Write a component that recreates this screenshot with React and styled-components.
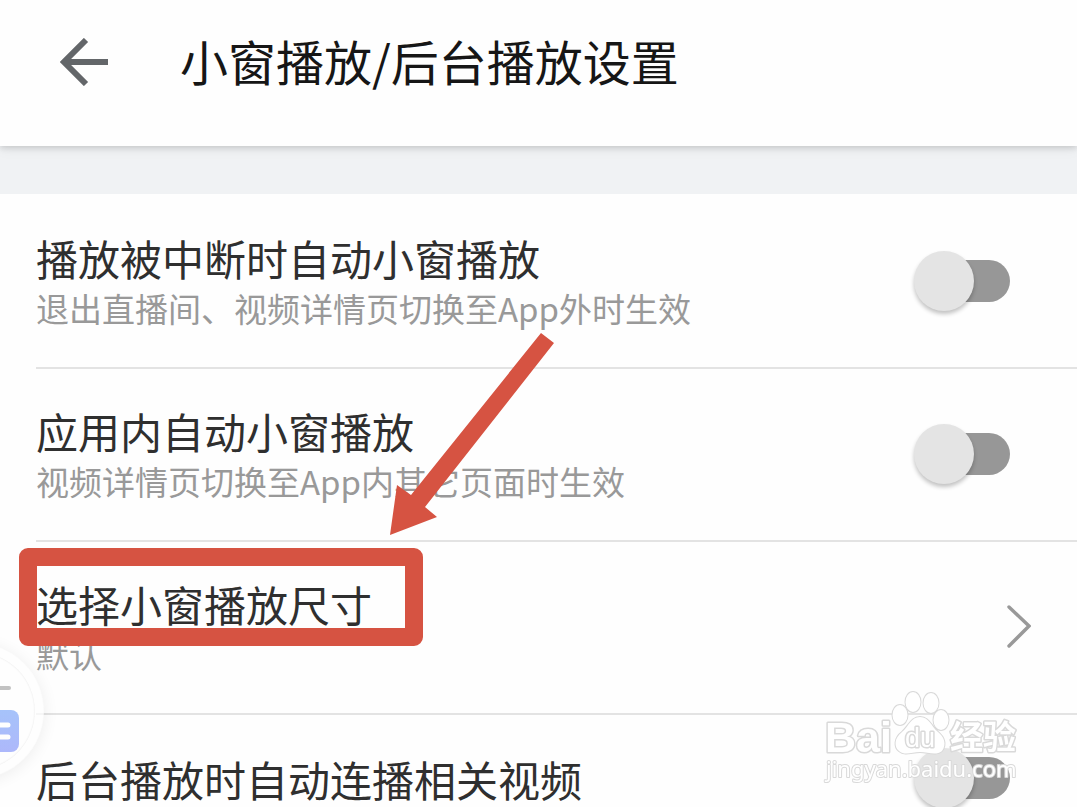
import { useState } from 'react';
import styled, { createGlobalStyle } from 'styled-components';

const GlobalStyle = createGlobalStyle`
  html {
    scrollbar-width: none;
  }

  body {
    margin: 0;
    overflow-x: hidden;
    background-color: #fefefe;
    font-family: 'Noto Sans CJK SC', sans-serif;
  }

  * {
    box-sizing: border-box;
  }
`;

const Page = styled.div`
  position: relative;
`;

const Header = styled.header`
  position: relative;
  display: flex;
  align-items: center;
  gap: 72px;
  padding: 24px 60px 46px;
  background-color: #fefefe;
  box-shadow: 0 2px 6px rgba(0, 0, 0, 0.14), 0 4px 12px rgba(0, 0, 0, 0.05);
`;

const BackButton = styled.button`
  display: flex;
  padding: 0;
  border: none;
  background: none;
  cursor: pointer;
`;

const Title = styled.h1`
  margin: 0;
  padding-bottom: 4px;
  font-weight: 400;
  font-size: 48px;
  line-height: 72px;
  color: #161616;
`;

const Content = styled.main`
  padding-top: 48px;
  background-color: #f0f2f4;
`;

const List = styled.div`
  padding: 2px 0 0 36px;
  background-color: #fefefe;
`;

const Row = styled.div`
  position: relative;
  display: flex;
  justify-content: space-between;
  align-items: center;
  width: 100%;
  min-height: 130px;
  padding: 0 67px 2px 0;
  border: none;
  border-bottom: 2px solid #e3e3e3;
  background: none;
  font-family: inherit;
  text-align: left;
`;

const LinkRow = styled(Row).attrs({ as: 'button', type: 'button' })`
  padding-right: 46px;
  cursor: pointer;
`;

const RowText = styled.span`
  display: flex;
  flex-direction: column;
  padding: ${props => (props.$tall ? '37px 0 32px' : '2px 0 0')};
`;

const RowTitle = styled.span`
  font-size: 42px;
  line-height: 50px;
  color: #2f2f2f;
`;

const RowNote = styled.span`
  font-size: 33px;
  line-height: 50px;
  color: #999999;
`;

const Toggle = styled.input.attrs({ type: 'checkbox', role: 'switch' })`
  appearance: none;
  position: relative;
  flex-shrink: 0;
  width: 96px;
  height: 60px;
  margin: 0;
  cursor: pointer;

  &::before {
    content: '';
    position: absolute;
    inset: 9px 0 9px 8px;
    border-radius: 21px;
    background-color: #979797;
  }

  &::after {
    content: '';
    position: absolute;
    top: 0;
    left: ${props => (props.checked ? '36px' : '0')};
    width: 60px;
    height: 60px;
    border-radius: 50%;
    background-color: #e4e4e4;
    box-shadow: 0 3px 4px rgba(0, 0, 0, 0.24);
  }
`;

const Highlight = styled.span`
  position: absolute;
  top: 6px;
  left: -17px;
  width: 404px;
  height: 98px;
  border: 18px solid #d65342;
  border-radius: 9px;
  pointer-events: none;
`;

const Pointer = styled.svg`
  position: absolute;
  top: -209px;
  left: 354px;
  pointer-events: none;
`;

const FloatingBall = styled.button`
  position: fixed;
  left: -92px;
  bottom: 28px;
  display: flex;
  justify-content: flex-end;
  align-items: center;
  width: 136px;
  height: 136px;
  padding: 0 16px 0 0;
  border: 9px solid rgba(254, 254, 254, 0.7);
  border-radius: 50%;
  background-color: #fefefe;
  background-clip: padding-box;
  box-shadow: 0 2px 16px rgba(0, 0, 0, 0.07), inset 0 0 2px rgba(0, 0, 0, 0.12);
`;

const Watermark = styled.svg`
  position: fixed;
  right: 54px;
  bottom: 14px;
  pointer-events: none;
`;

const BackIcon = () => (
  <svg width="48" height="48" viewBox="0 0 48 48" fill="none">
    <path d="M26 2L4 24L26 46M4 24H48" stroke="#636669" strokeWidth="6" />
  </svg>
);

const ChevronIcon = () => (
  <svg width="24" height="44" viewBox="0 0 24 44" fill="none">
    <path
      d="M2 2L22 21L2 41"
      stroke="#999999"
      strokeWidth="3.4"
      strokeLinecap="round"
    />
  </svg>
);

const PointerArrow = () => (
  <Pointer width="166" height="204" viewBox="0 0 166 204">
    <path d="M151 0L164 10L35 174L47 184L0 202L7 152L21 162Z" fill="#d65342" />
  </Pointer>
);

const BallIcon = () => (
  <svg width="40" height="64" viewBox="0 0 40 64" fill="none" overflow="visible">
    <defs>
      <linearGradient id="ball" x1="0" y1="0" x2="0" y2="1">
        <stop offset="0" stopColor="#a6c3fa" />
        <stop offset="1" stopColor="#adb8fb" />
      </linearGradient>
    </defs>
    <path d="M6 9H30" stroke="#c2c2c2" strokeWidth="4" strokeLinecap="round" />
    <rect x="-3" y="31" width="43" height="42" rx="8" fill="url(#ball)" />
    <path
      d="M6 46H29M6 58H29"
      stroke="#fefefe"
      strokeWidth="5"
      strokeLinecap="round"
    />
  </svg>
);

const BaiduMark = () => (
  <Watermark width="200" height="104" viewBox="0 0 200 104">
    <g
      fill="#ffffff"
      stroke="#d9d9d9"
      strokeWidth="3"
      paintOrder="stroke"
      strokeLinejoin="round"
    >
      <text
        x="2"
        y="63"
        fontFamily="Liberation Sans"
        fontWeight="700"
        fontSize="43"
      >
        Bai
      </text>
      <g strokeWidth="2">
        <ellipse cx="77" cy="26" rx="7.5" ry="10" />
        <ellipse cx="90" cy="13" rx="7.5" ry="10" />
        <ellipse cx="108" cy="14" rx="7.5" ry="10" />
        <ellipse cx="118" cy="31" rx="7.5" ry="10" />
        <path d="M97 28C88 28 86 37 79 43C71 49 71 58 76 62C82 67 89 63 97 63C105 63 113 67 119 62C124 55 121 48 115 43C108 37 106 28 97 28Z" />
      </g>
      <text
        x="82"
        y="58"
        fontFamily="Liberation Sans"
        fontSize="27"
        strokeWidth="3"
      >
        du
      </text>
      <text
        x="127"
        y="60"
        fontFamily="Noto Sans CJK SC"
        fontWeight="700"
        fontSize="33"
      >
        经验
      </text>
      <text
        x="3"
        y="88"
        fontFamily="Noto Sans"
        fontSize="22"
        strokeWidth="2"
      >
        jingyan.baidu.com
      </text>
    </g>
  </Watermark>
);

const SwitchRow = ({ id, title, note }) => {
  const [checked, setChecked] = useState(false);

  return (
    <Row>
      <RowText as="label" htmlFor={id} $tall={Boolean(note)}>
        <RowTitle>{title}</RowTitle>
        {note && <RowNote>{note}</RowNote>}
      </RowText>
      <Toggle
        id={id}
        checked={checked}
        onChange={e => setChecked(e.target.checked)}
      />
    </Row>
  );
};

const App = () => (
  <Page>
    <GlobalStyle />
    <Header>
      <BackButton type="button" aria-label="返回">
        <BackIcon />
      </BackButton>
      <Title>小窗播放/后台播放设置</Title>
    </Header>
    <Content>
      <List>
        <SwitchRow
          id="interrupted"
          title="播放被中断时自动小窗播放"
          note="退出直播间、视频详情页切换至App外时生效"
        />
        <SwitchRow
          id="in-app"
          title="应用内自动小窗播放"
          note="视频详情页切换至App内其它页面时生效"
        />
        <LinkRow>
          <RowText $tall>
            <RowTitle>选择小窗播放尺寸</RowTitle>
            <RowNote>默认</RowNote>
          </RowText>
          <ChevronIcon />
          <Highlight />
          <PointerArrow />
        </LinkRow>
        <SwitchRow id="background" title="后台播放时自动连播相关视频" />
      </List>
    </Content>
    <FloatingBall type="button" aria-label="悬浮球">
      <BallIcon />
    </FloatingBall>
    <BaiduMark />
  </Page>
);

export default App;
